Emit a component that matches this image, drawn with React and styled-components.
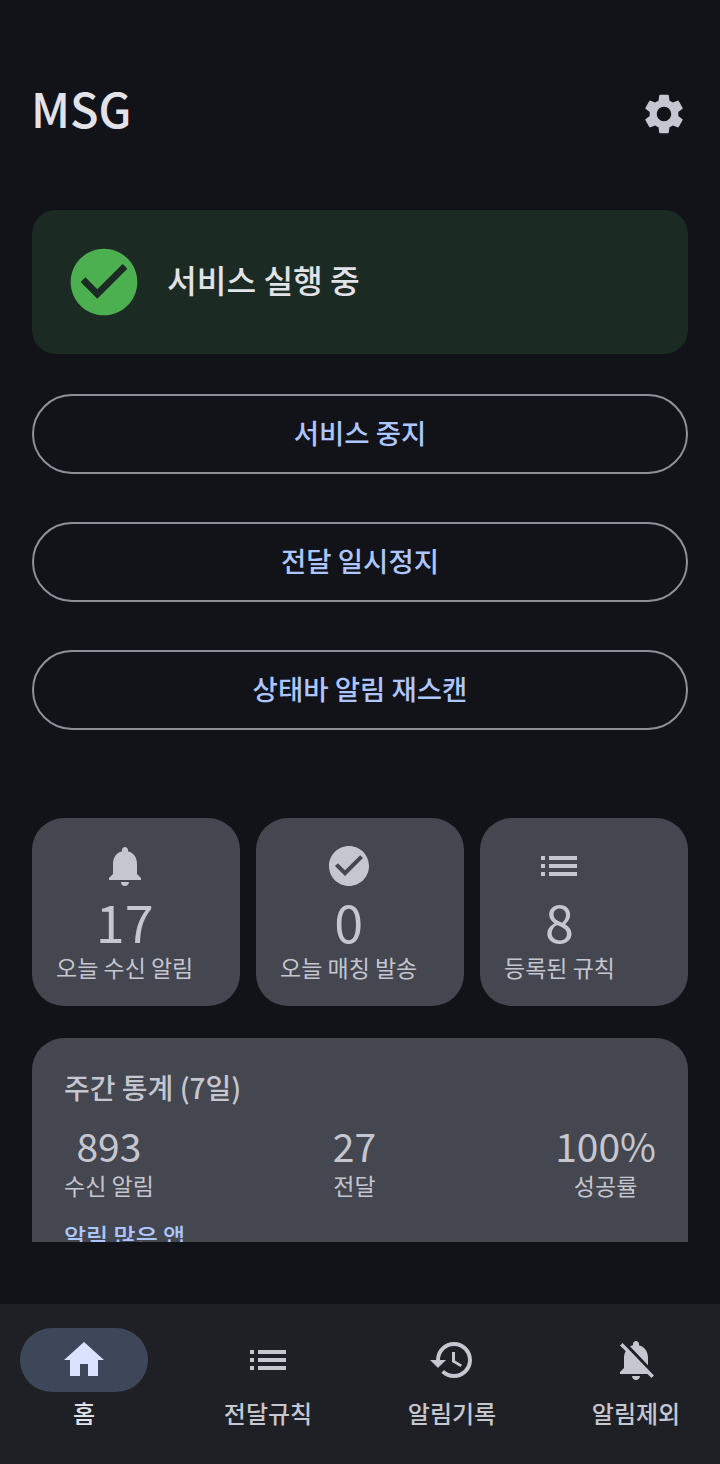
import React from 'react';
import styled, { createGlobalStyle } from 'styled-components';
import {
  MdSettings,
  MdCheckCircle,
  MdNotifications,
  MdList,
  MdHome,
  MdHistory,
  MdNotificationsOff,
} from 'react-icons/md';

const GlobalStyle = createGlobalStyle`
  html, body {
    margin: 0;
    padding: 0;
    background-color: #111318;
  }

  body {
    font-family: "Noto Sans CJK KR", "Noto Sans", sans-serif;
  }
`;

const Page = styled.div`
  display: flex;
  flex-direction: column;
  box-sizing: border-box;
  width: 720px;
  height: 1464px;
  background-color: #111318;
`;

const Scroller = styled.main`
  box-sizing: border-box;
  height: 1242px;
  padding: 74px 32px 0;
  overflow: hidden;
  flex: none;
`;

const Header = styled.header`
  display: flex;
  align-items: center;
  justify-content: space-between;
  height: 80px;
  margin-bottom: 56px;
`;

const Title = styled.h1`
  margin: 0;
  margin-left: -1px;
  padding-bottom: 12px;
  font-size: 47px;
  line-height: 64px;
  font-weight: 500;
  color: #e2e2e9;
`;

const GearButton = styled.div`
  display: flex;
  color: #c5c6d0;
  font-size: 48px;
`;

const Banner = styled.section`
  display: flex;
  align-items: center;
  gap: 23px;
  box-sizing: border-box;
  height: 144px;
  padding: 0 32px;
  border-radius: 24px;
  background-color: #1b2a22;
  margin-bottom: 40px;
`;

const BannerIcon = styled.div`
  display: flex;
  color: #4caf50;
  font-size: 80px;
`;

const BannerText = styled.span`
  padding-bottom: 6px;
  font-size: 32.3px;
  font-weight: 500;
  color: #e2e2e9;
`;

const Actions = styled.div`
  display: flex;
  flex-direction: column;
  gap: 48px;
  margin-bottom: 88px;
`;

const OutlineButton = styled.button`
  display: flex;
  align-items: center;
  justify-content: center;
  box-sizing: border-box;
  height: 80px;
  padding: 0 0 5px;
  border: 2px solid #8f9099;
  border-radius: 40px;
  background: transparent;
  color: #aec6ff;
  font-family: inherit;
  font-size: 27.5px;
  font-weight: 500;
`;

const StatRow = styled.div`
  display: flex;
  gap: 16px;
  margin-bottom: 32px;
`;

const StatCard = styled.div`
  display: flex;
  box-sizing: border-box;
  flex: 1;
  height: 188px;
  padding: 24px;
  border-radius: 32px;
  background-color: #44474f;
  color: #c5c6d0;
`;

const StatColumn = styled.div`
  display: flex;
  flex-direction: column;
  align-items: center;
`;

const StatIcon = styled.div`
  display: flex;
  font-size: 48px;
`;

const StatValue = styled.div`
  font-size: 52px;
  line-height: 61px;
`;

const StatLabel = styled.div`
  font-size: 23px;
  line-height: 32px;
`;

const WeekCard = styled.section`
  box-sizing: border-box;
  padding: 32px;
  height: 300px;
  border-radius: 32px;
  background-color: #44474f;
  color: #c5c6d0;
`;

const WeekTitle = styled.h2`
  margin: 0 0 17px;
  font-size: 28px;
  line-height: 34px;
  font-weight: 500;
`;

const WeekRow = styled.div`
  display: flex;
  justify-content: space-between;
  margin-bottom: 19px;
`;

const WeekColumn = styled.div`
  display: flex;
  flex-direction: column;
  align-items: center;
`;

const WeekValue = styled.div`
  font-size: 39px;
  line-height: 48px;
`;

const WeekLabel = styled.div`
  font-size: 23px;
  line-height: 32px;
`;

const TopAppsTitle = styled.h3`
  margin: 0;
  font-size: 24px;
  line-height: 32px;
  font-weight: 500;
  color: #aec6ff;
`;

const BottomNav = styled.nav`
  display: flex;
  justify-content: space-between;
  box-sizing: border-box;
  flex: none;
  height: 160px;
  margin-top: auto;
  padding: 24px 20px 0;
  background-color: #1e2025;
`;

const NavItem = styled.div`
  display: flex;
  flex-direction: column;
  align-items: center;
  width: 128px;
  color: ${(p) => (p.$active ? '#e2e2e9' : '#c5c6d0')};
`;

const NavPill = styled.div`
  display: flex;
  align-items: center;
  justify-content: center;
  width: 128px;
  height: 64px;
  border-radius: 32px;
  font-size: 48px;
  background-color: ${(p) => (p.$active ? '#3e4759' : 'transparent')};
  color: ${(p) => (p.$active ? '#dae2ff' : '#c5c6d0')};
`;

const NavLabel = styled.span`
  margin-top: 5px;
  font-size: 24px;
  line-height: 32px;
  font-weight: 500;
  white-space: nowrap;
`;

const stats = [
  { icon: <MdNotifications />, value: '17', label: '오늘 수신 알림' },
  { icon: <MdCheckCircle />, value: '0', label: '오늘 매칭 발송' },
  { icon: <MdList />, value: '8', label: '등록된 규칙' },
];

const week = [
  { value: '893', label: '수신 알림' },
  { value: '27', label: '전달' },
  { value: '100%', label: '성공률' },
];

const navItems = [
  { icon: <MdHome />, label: '홈', active: true },
  { icon: <MdList />, label: '전달규칙' },
  { icon: <MdHistory />, label: '알림기록' },
  { icon: <MdNotificationsOff />, label: '알림제외' },
];

export default function App() {
  return (
    <Page>
      <GlobalStyle />
      <Scroller>
        <Header>
          <Title>MSG</Title>
          <GearButton><MdSettings /></GearButton>
        </Header>
        <Banner>
          <BannerIcon><MdCheckCircle /></BannerIcon>
          <BannerText>서비스 실행 중</BannerText>
        </Banner>
        <Actions>
          <OutlineButton>서비스 중지</OutlineButton>
          <OutlineButton>전달 일시정지</OutlineButton>
          <OutlineButton>상태바 알림 재스캔</OutlineButton>
        </Actions>
        <StatRow>
          {stats.map((s) => (
            <StatCard key={s.label}>
              <StatColumn>
                <StatIcon>{s.icon}</StatIcon>
                <StatValue>{s.value}</StatValue>
                <StatLabel>{s.label}</StatLabel>
              </StatColumn>
            </StatCard>
          ))}
        </StatRow>
        <WeekCard>
          <WeekTitle>주간 통계 (7일)</WeekTitle>
          <WeekRow>
            {week.map((w) => (
              <WeekColumn key={w.label}>
                <WeekValue>{w.value}</WeekValue>
                <WeekLabel>{w.label}</WeekLabel>
              </WeekColumn>
            ))}
          </WeekRow>
          <TopAppsTitle>알림 많은 앱</TopAppsTitle>
        </WeekCard>
      </Scroller>
      <BottomNav>
        {navItems.map((n) => (
          <NavItem key={n.label} $active={n.active}>
            <NavPill $active={n.active}>{n.icon}</NavPill>
            <NavLabel>{n.label}</NavLabel>
          </NavItem>
        ))}
      </BottomNav>
    </Page>
  );
}
